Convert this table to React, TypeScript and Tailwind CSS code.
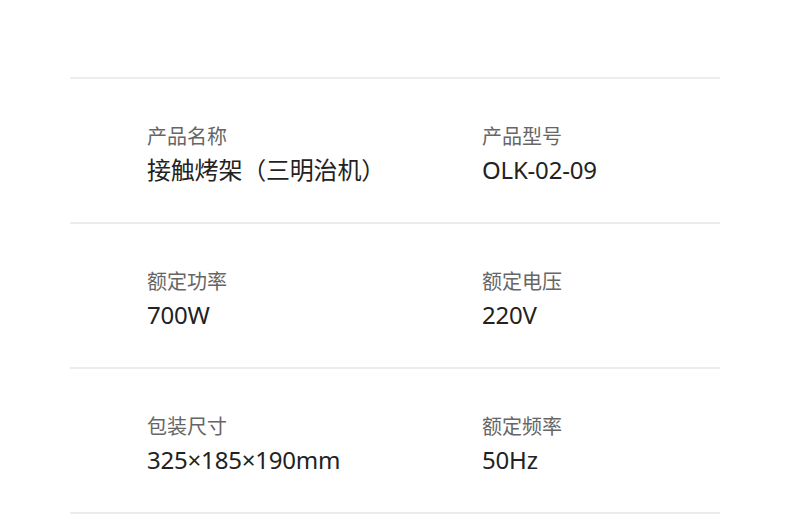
const rows = [
  [
    { label: "产品名称", value: "接触烤架（三明治机）" },
    { label: "产品型号", value: "OLK-02-09" },
  ],
  [
    { label: "额定功率", value: "700W" },
    { label: "额定电压", value: "220V" },
  ],
  [
    { label: "包装尺寸", value: "325×185×190mm" },
    { label: "额定频率", value: "50Hz" },
  ],
];

export default function App() {
  return (
    <div className="min-h-[520px] w-full bg-white pt-[77px] font-['Noto_Sans','Noto_Sans_CJK_SC',sans-serif]">
      <div className="mx-auto w-[650px] border-t-2 border-[#ececec]">
        {rows.map((row, i) => (
          <div
            key={i}
            className="grid h-[145px] grid-cols-[335px_1fr] border-b-2 border-[#ececec] pl-[77px] pt-[44px]"
          >
            {row.map((cell) => (
              <div key={cell.label} className="flex flex-col gap-[3px]">
                <span className="text-[20px] leading-[28px] text-[#666666]">{cell.label}</span>
                <span className="text-[24px] leading-[32px] tracking-[-0.2px] text-[#222222]">{cell.value}</span>
              </div>
            ))}
          </div>
        ))}
      </div>
    </div>
  );
}
